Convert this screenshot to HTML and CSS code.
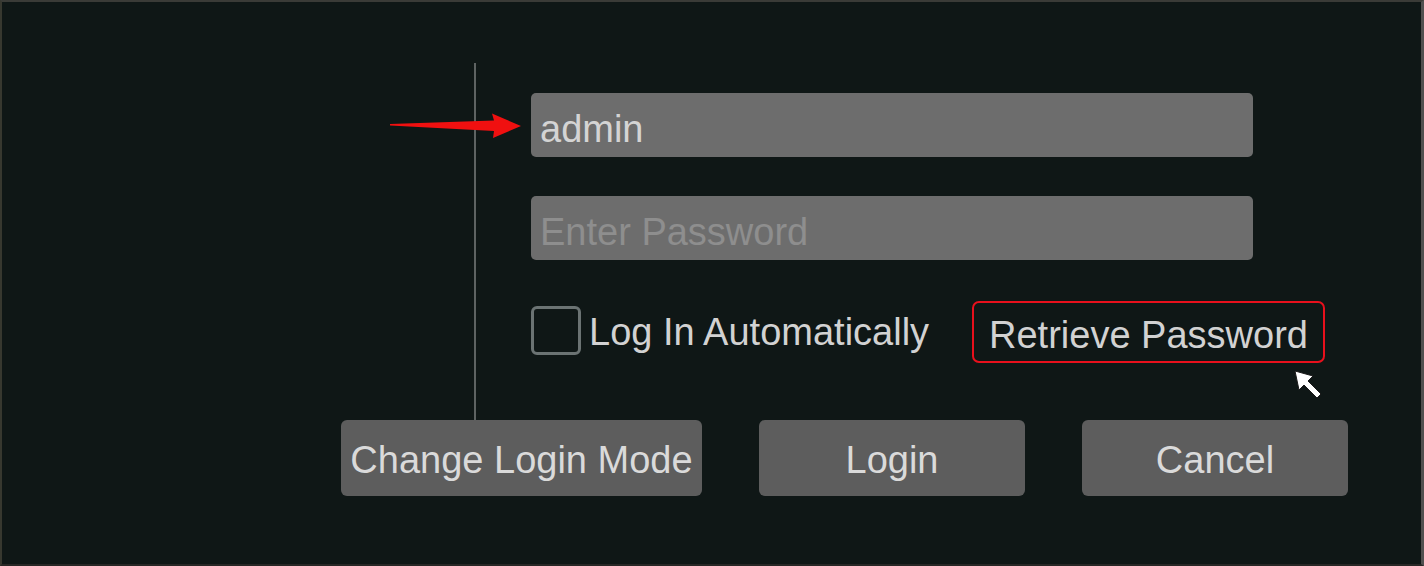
FILE: index.html
```html
<!DOCTYPE html>
<html>
<head>
<meta charset="utf-8">
<link rel="stylesheet" href="styles.css">
</head>
<body>
<div class="screen">
  <div class="main">
    <div class="divider"></div>
    <div class="form">
      <div class="field field-user">admin</div>
      <div class="field field-pass">Enter Password</div>
      <div class="options">
        <div class="auto">
          <span class="checkbox"></span>
          <span class="auto-label">Log In Automatically</span>
        </div>
        <div class="retrieve">Retrieve Password</div>
      </div>
    </div>
  </div>
  <div class="buttons">
    <div class="btn btn-mode">Change Login Mode</div>
    <div class="btn btn-small">Login</div>
    <div class="btn btn-small">Cancel</div>
  </div>
  <svg class="arrow" width="140" height="30" viewBox="385 112 140 30">
    <polygon points="390,124 494,120.5 492,113.5 521,126 493,138 494,131 390,125.5" fill="#f01010"/>
  </svg>
  <svg class="cursor" width="30" height="32" viewBox="-1 -1 30 32">
    <polygon points="0,0 4,19 9,14 22,27 26,23 13,10 18,5" fill="#ffffff" stroke="#1a1a1a" stroke-width="1" stroke-linejoin="round"/>
  </svg>
</div>
</body>
</html>
```
FILE: styles.css
```css
* { box-sizing: border-box; }
html, body { margin: 0; padding: 0; background: #0f1716; }
.screen {
  position: relative;
  width: 1424px;
  height: 566px;
  background: #0f1716;
  border-top: 2px solid #3a3b37;
  border-left: 2px solid #37382f;
  border-right: 3px solid #505050;
  border-bottom: 2px solid #272725;
  font-family: "Liberation Sans", Arial, sans-serif;
  font-size: 38px;
  overflow: hidden;
}
.main {
  display: flex;
  align-items: flex-start;
  padding-top: 61px;
  height: 418px;
}
.divider {
  margin-left: 472px;
  width: 2px;
  height: 357px;
  background: #5e6362;
  flex: none;
}
.form {
  margin-left: 55px;
  padding-top: 30px;
  width: 722px;
  display: flex;
  flex-direction: column;
}
.field {
  height: 64px;
  border-radius: 5px;
  background: #6d6d6d;
  padding: 8px 10px 0 9px;
  line-height: 56px;
  white-space: nowrap;
}
.field-user { color: #d4d4d4; }
.field-pass { color: #8e8e8e; margin-top: 39px; }
.options {
  margin-top: 41px;
  display: flex;
  align-items: flex-start;
}
.auto {
  width: 441px;
  display: flex;
  align-items: flex-start;
  flex: none;
}
.checkbox {
  margin-top: 5px;
  width: 50px;
  height: 49px;
  border: 3px solid #6b7373;
  border-radius: 6px;
  flex: none;
}
.auto-label {
  margin-left: 8px;
  padding-top: 3px;
  line-height: 57px;
  color: #d2d2d2;
  white-space: nowrap;
}
.retrieve {
  width: 353px;
  height: 62px;
  border: 2px solid #e8101c;
  border-radius: 7px;
  padding-top: 6px;
  line-height: 52px;
  text-align: center;
  color: #d2d2d2;
  white-space: nowrap;
  flex: none;
}
.buttons {
  display: flex;
  margin-left: 339px;
  gap: 57px;
}
.btn {
  height: 76px;
  border-radius: 6px;
  background: #5d5d5d;
  color: #dadada;
  text-align: center;
  padding-top: 4px;
  line-height: 72px;
  white-space: nowrap;
}
.btn-mode { width: 361px; }
.btn-small { width: 266px; }
.arrow {
  position: absolute;
  left: 383px;
  top: 110px;
}
.cursor {
  position: absolute;
  left: 1292px;
  top: 368px;
}
```
